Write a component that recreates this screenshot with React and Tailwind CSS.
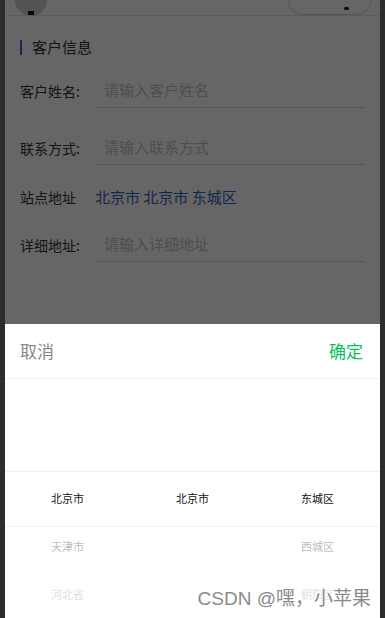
import React from "react";

const font = { fontFamily: '"Noto Sans CJK SC", "Noto Sans", sans-serif' };

function InputRow({ label, placeholder, className }) {
  return (
    <div className={"flex items-center pl-[15px] pr-[15px] " + className}>
      <div className="w-[75px] text-[14px] text-[#333]">{label}</div>
      <div className="flex-1 h-[34px] flex items-center border-b border-[#d8d8d8] pl-[9px] text-[15px] text-[#c4c4c4]">
        {placeholder}
      </div>
    </div>
  );
}

function Column({ items }) {
  const colors = ["text-[#111]", "text-[#bdbdbd]", "text-[#e0e0e0]"];
  return (
    <div className="flex-1 flex flex-col">
      {items.map((t, i) => (
        <div key={i} className={"h-[48px] flex items-center justify-center text-[11px] " + colors[i]}>
          {t}
        </div>
      ))}
    </div>
  );
}

export default function App() {
  return (
    <div style={font} className="w-[385px] h-[618px] bg-[#2d2d2d] flex px-[5px] overflow-hidden">
      <div className="w-[375px] h-full bg-white relative overflow-hidden">
        {/* header (scrolled, mostly hidden) */}
        <div className="h-[44px] mt-[-28px] border-b border-[#e6e6e6] flex items-center justify-between pl-[10px] pr-[8px]">
          <div className="w-[32px] h-[32px] rounded-full bg-[#cfcfcf] mt-[12px] flex items-end justify-center pb-[1px]">
            <div className="w-[6px] h-[4px] bg-[#111]" />
          </div>
          <div className="w-[85px] h-[32px] rounded-full border border-[#d0d0d0] mt-[10px] flex items-end justify-end pr-[22px] pb-[4px]">
            <div className="w-[5px] h-[3px] bg-[#111] rounded-sm" />
          </div>
        </div>

        {/* section title */}
        <div className="mt-[21px] h-[20px] flex items-center pl-[15px]">
          <div className="w-[2px] h-[15px] bg-[#2f6fd6]" />
          <div className="ml-[10px] text-[15px] text-[#333]">客户信息</div>
        </div>

        <InputRow label="客户姓名:" placeholder="请输入客户姓名" className="mt-[17px]" />
        <InputRow label="联系方式:" placeholder="请输入联系方式" className="mt-[23px]" />
        <div className="flex items-center pl-[15px] mt-[15px] h-[34px]">
          <div className="w-[75px] text-[14px] text-[#333]">站点地址</div>
          <div className="text-[15px] text-[#2c62c9] whitespace-pre">北京市 北京市 东城区</div>
        </div>
        <InputRow label="详细地址:" placeholder="请输入详细地址" className="mt-[14px]" />

        {/* mask */}
        <div className="absolute inset-0 bg-black/60" />

        {/* popup */}
        <div className="absolute left-0 right-0 bottom-0 h-[294px] bg-white flex flex-col">
          <div className="h-[55px] border-b border-[#f0f0f0] flex items-center justify-between pl-[15px] pr-[17px] text-[17px]">
            <span className="text-[#888]">取消</span>
            <span className="text-[#07c160]">确定</span>
          </div>
          <div className="relative flex-1 flex pt-[95px]">
            <div className="absolute left-0 right-0 top-[92px] h-[56px] border-y border-[#efefef]" />
            <Column items={["北京市", "天津市", "河北省"]} />
            <Column items={["北京市", "", ""]} />
            <Column items={["东城区", "西城区", "朝阳区"]} />
          </div>
        </div>

        {/* watermark */}
        <div
          className="absolute right-[9px] bottom-[5px] text-[19px] text-[#8a8a8a] whitespace-pre"
          style={{ fontFamily: '"Liberation Sans", "Noto Sans CJK SC", sans-serif', textShadow: "0 0 2px #fff, 0 0 2px #fff" }}
        >
          CSDN @嘿，小苹果
        </div>
      </div>
    </div>
  );
}
